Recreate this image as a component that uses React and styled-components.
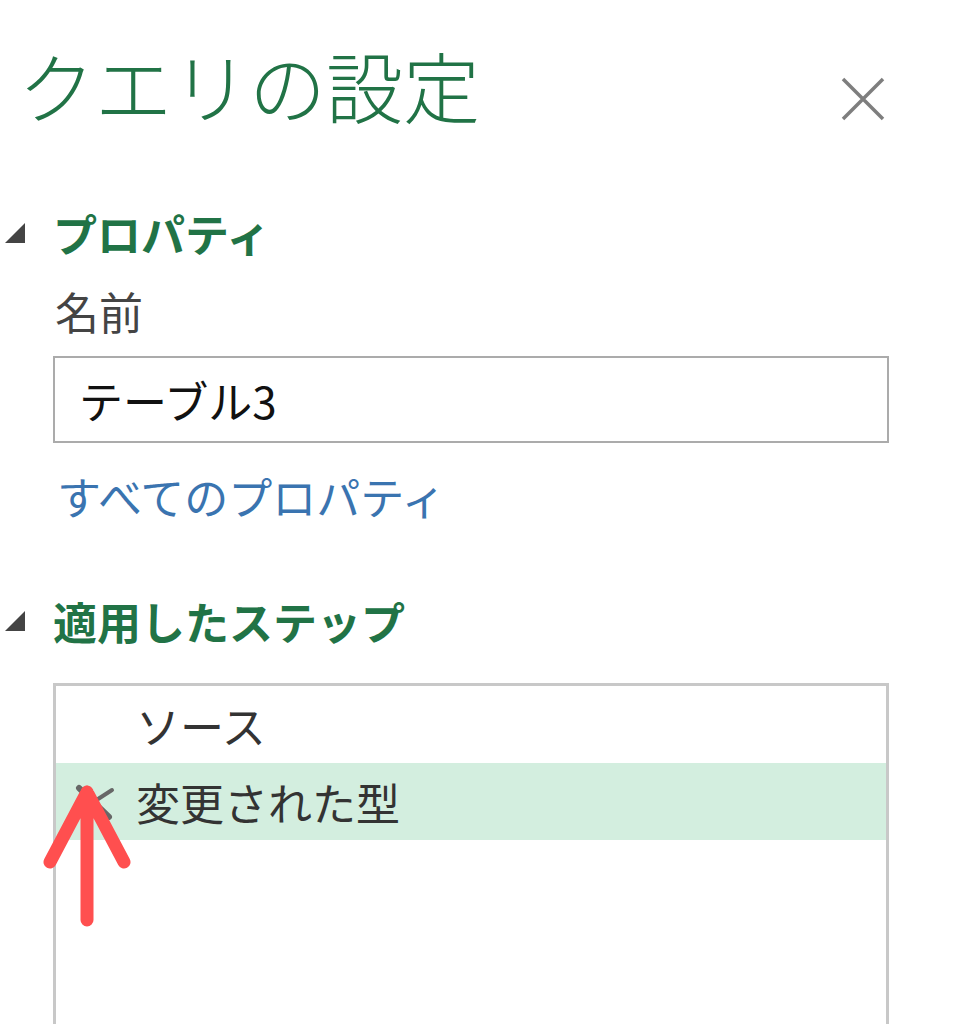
import React from "react"
import styled, { createGlobalStyle } from "styled-components"

const GlobalStyle = createGlobalStyle`
  html, body {
    margin: 0;
    padding: 0;
    background: #ffffff;
  }
  body {
    font-family: "Noto Sans CJK JP", "Noto Sans", sans-serif;
  }
`

const Pane = styled.div`
  position: relative;
  width: 970px;
  height: 1024px;
  overflow: hidden;
  background: #fff;
`

const Header = styled.div`
  display: flex;
  align-items: center;
  justify-content: space-between;
  padding: 34px 84px 0 18px;
  height: 100px;
`

const Title = styled.h1`
  margin: 0;
  font-size: 77px;
  font-weight: 300;
  line-height: 1;
  color: #217346;
  letter-spacing: 0;
`

const CloseButton = styled.button`
  border: none;
  background: none;
  padding: 0;
  margin-top: 30px;
  width: 46px;
  height: 46px;
  cursor: pointer;
`

const Section = styled.section`
  display: grid;
  grid-template-columns: 53px 836px;
  margin-top: ${(p) => p.$top}px;
`

const SectionHead = styled.div`
  display: contents;
`

const Caret = styled.span`
  align-self: center;
  justify-self: start;
  margin-left: 5px;
  width: 0;
  height: 0;
  border-left: 20px solid transparent;
  border-bottom: 20px solid #444;
`

const SectionTitle = styled.h2`
  margin: 0;
  font-size: 44px;
  font-weight: 700;
  line-height: 60px;
  color: #217346;
`

const Body = styled.div`
  grid-column: 2;
  display: flex;
  flex-direction: column;
`

const Label = styled.div`
  font-size: 44px;
  color: #444;
  line-height: 60px;
  margin-top: 18px;
  padding-left: 2px;
`

const NameBox = styled.div`
  box-sizing: border-box;
  margin-top: 15px;
  height: 87px;
  border: 2px solid #ababab;
  display: flex;
  align-items: center;
  padding-left: 24px;
  font-size: 44px;
  color: #111;
`

const Link = styled.a`
  margin-top: 28px;
  font-size: 44px;
  line-height: 50px;
  color: #3a74b0;
  text-decoration: none;
  padding-left: 4px;
`

const StepList = styled.ul`
  list-style: none;
  margin: 32px 0 0;
  padding: 0;
  box-sizing: border-box;
  height: 400px;
  border: 3px solid #c8c8c8;
`

const Step = styled.li`
  display: flex;
  align-items: center;
  height: 77px;
  background: ${(p) => (p.$selected ? "#d3eedf" : "transparent")};
  font-size: 44px;
  color: #333;
`

const StepIcon = styled.span`
  width: 80px;
  display: flex;
  justify-content: flex-start;
  padding-left: 18px;
  box-sizing: border-box;
`

const ArrowMark = styled.svg`
  position: absolute;
  left: 40px;
  top: 784px;
`

const CloseIcon = () => (
  <svg width="46" height="46" viewBox="0 0 46 46">
    <path d="M3 3 L43 43 M43 3 L3 43" stroke="#7e7e7e" strokeWidth="3.5" fill="none" />
  </svg>
)

const StepErrorIcon = () => (
  <svg width="42" height="36" viewBox="0 0 42 36">
    <path d="M5 4 L35 33" stroke="#676767" strokeWidth="6" strokeLinecap="round" />
    <path d="M21 17 L38 6" stroke="#676767" strokeWidth="4" strokeLinecap="round" />
  </svg>
)

const App = () => {
  return (
    <Pane>
      <GlobalStyle />
      <Header>
        <Title>クエリの設定</Title>
        <CloseButton aria-label="閉じる">
          <CloseIcon />
        </CloseButton>
      </Header>

      <Section $top={69}>
        <SectionHead>
          <Caret />
          <SectionTitle>プロパティ</SectionTitle>
        </SectionHead>
        <Body>
          <Label>名前</Label>
          <NameBox>テーブル3</NameBox>
          <Link href="#">すべてのプロパティ</Link>
        </Body>
      </Section>

      <Section $top={70}>
        <SectionHead>
          <Caret />
          <SectionTitle>適用したステップ</SectionTitle>
        </SectionHead>
        <Body>
          <StepList>
            <Step>
              <StepIcon />
              ソース
            </Step>
            <Step $selected>
              <StepIcon>
                <StepErrorIcon />
              </StepIcon>
              変更された型
            </Step>
          </StepList>
        </Body>
      </Section>

      <ArrowMark width="94" height="150" viewBox="0 0 94 150">
        <path
          d="M47 8 L47 136 M10 78 L47 8 L84 78"
          stroke="#ff4f4f"
          strokeWidth="13"
          strokeLinecap="round"
          strokeLinejoin="round"
          fill="none"
        />
      </ArrowMark>
    </Pane>
  )
}

export default App
